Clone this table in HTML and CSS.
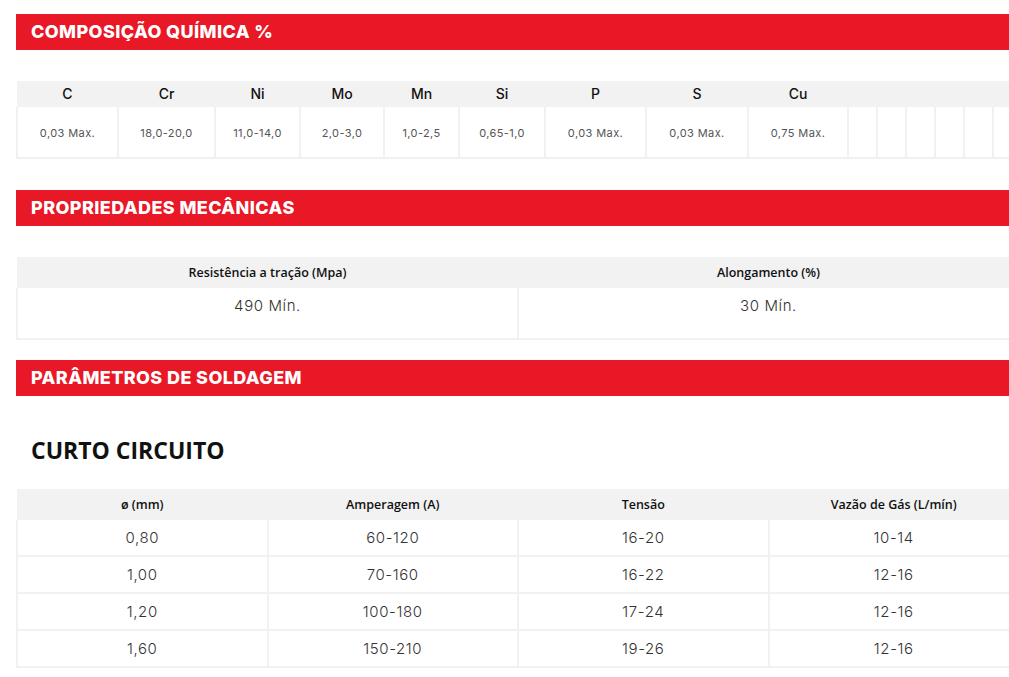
FILE: index.html
```html
<!DOCTYPE html>
<html lang="pt-BR">
<head>
<meta charset="utf-8">
<title>Especificações</title>
<link rel="stylesheet" href="styles.css">
</head>
<body>
<main class="page">
  <section class="block block-first">
    <h2 class="bar">COMPOSIÇÃO QUÍMICA %</h2>
    <table class="tbl tbl-chem">
      <colgroup>
        <col class="c101"><col class="c97"><col class="c85"><col class="c84"><col class="c75"><col class="c86"><col class="c101"><col class="c102"><col class="c100">
        <col class="c29"><col class="c29"><col class="c29"><col class="c29"><col class="c29"><col class="c29">
      </colgroup>
      <thead>
        <tr><th>C</th><th>Cr</th><th>Ni</th><th>Mo</th><th>Mn</th><th>Si</th><th>P</th><th>S</th><th>Cu</th><th></th><th></th><th></th><th></th><th></th><th></th></tr>
      </thead>
      <tbody>
        <tr><td>0,03 Max.</td><td>18,0-20,0</td><td>11,0-14,0</td><td>2,0-3,0</td><td>1,0-2,5</td><td>0,65-1,0</td><td>0,03 Max.</td><td>0,03 Max.</td><td>0,75 Max.</td><td></td><td></td><td></td><td></td><td></td><td></td></tr>
      </tbody>
    </table>
  </section>

  <section class="block">
    <h2 class="bar">PROPRIEDADES MECÂNICAS</h2>
    <table class="tbl tbl-mech">
      <thead>
        <tr><th>Resistência a tração (Mpa)</th><th>Alongamento (%)</th></tr>
      </thead>
      <tbody>
        <tr><td>490 Mín.</td><td>30 Mín.</td></tr>
      </tbody>
    </table>
  </section>

  <section class="block block-last">
    <h2 class="bar">PARÂMETROS DE SOLDAGEM</h2>
    <h3 class="subtitle">CURTO CIRCUITO</h3>
    <table class="tbl tbl-weld">
      <thead>
        <tr><th>ø (mm)</th><th>Amperagem (A)</th><th>Tensão</th><th>Vazão de Gás (L/mín)</th></tr>
      </thead>
      <tbody>
        <tr><td>0,80</td><td>60-120</td><td>16-20</td><td>10-14</td></tr>
        <tr><td>1,00</td><td>70-160</td><td>16-22</td><td>12-16</td></tr>
        <tr><td>1,20</td><td>100-180</td><td>17-24</td><td>12-16</td></tr>
        <tr><td>1,60</td><td>150-210</td><td>19-26</td><td>12-16</td></tr>
      </tbody>
    </table>
  </section>
</main>
</body>
</html>
```

FILE: styles.css
```css
html, body {
  margin: 0;
  padding: 0;
  background: #ffffff;
  overflow: hidden;
}

.page {
  width: 1004px;
  padding: 14px 0 0 16px;
  font-family: Inter, "Open Sans", sans-serif;
}

.block {
  display: flex;
  flex-direction: column;
}

.block + .block {
  margin-top: 31px;
}

.block-last {
  margin-top: 20px !important;
}

.bar {
  margin: 0;
  height: 36px;
  background: #e81826;
  color: #ffffff;
  font-family: Inter, sans-serif;
  font-weight: 800;
  font-size: 18px;
  line-height: 36px;
  padding-left: 15px;
  letter-spacing: 0.4px;
}

.tbl {
  border-collapse: collapse;
  table-layout: fixed;
  width: 1004px;
  margin-top: 31px;
}

.tbl th {
  background: #f2f2f2;
  color: #111111;
  text-align: center;
  padding: 0;
}

.tbl td {
  text-align: center;
  border: 2px solid #f1f1f1;
  border-top: 0;
  padding: 0;
}

.tbl tbody tr + tr td {
  border-top: 2px solid #f1f1f1;
}

/* chemical table */
.tbl-chem th {
  height: 26px;
  box-sizing: border-box;
  padding-bottom: 2px;
  font-size: 14px;
  font-weight: 500;
}

.tbl-chem td {
  height: 51px;
  font-size: 11px;
  color: #555555;
  font-weight: 400;
  letter-spacing: 0.4px;
  padding-top: 1px;
  box-sizing: border-box;
}

.c101 { width: 101px; }
.c97 { width: 97px; }
.c85 { width: 85px; }
.c84 { width: 84px; }
.c75 { width: 75px; }
.c86 { width: 86px; }
.c102 { width: 102px; }
.c100 { width: 100px; }
.c29 { width: 29px; }

/* mechanical table */
.tbl-mech th,
.tbl-weld th {
  height: 31px;
  font-family: "Open Sans", sans-serif;
  font-size: 12.5px;
  font-weight: 600;
}

.tbl-mech td {
  height: 51px;
  vertical-align: top;
  padding-top: 8px;
  box-sizing: border-box;
  font-size: 15px;
  font-weight: 300;
  letter-spacing: 0.6px;
  color: #333333;
}

/* welding */
.subtitle {
  margin: 39px 0 0 15px;
  font-family: "Open Sans", sans-serif;
  font-weight: 700;
  font-size: 23px;
  line-height: 30px;
  color: #111111;
}

.tbl-weld {
  margin-top: 24px;
}

.tbl-weld td {
  height: 35px;
  font-size: 15px;
  font-weight: 300;
  letter-spacing: 0.6px;
  color: #333333;
}
```
